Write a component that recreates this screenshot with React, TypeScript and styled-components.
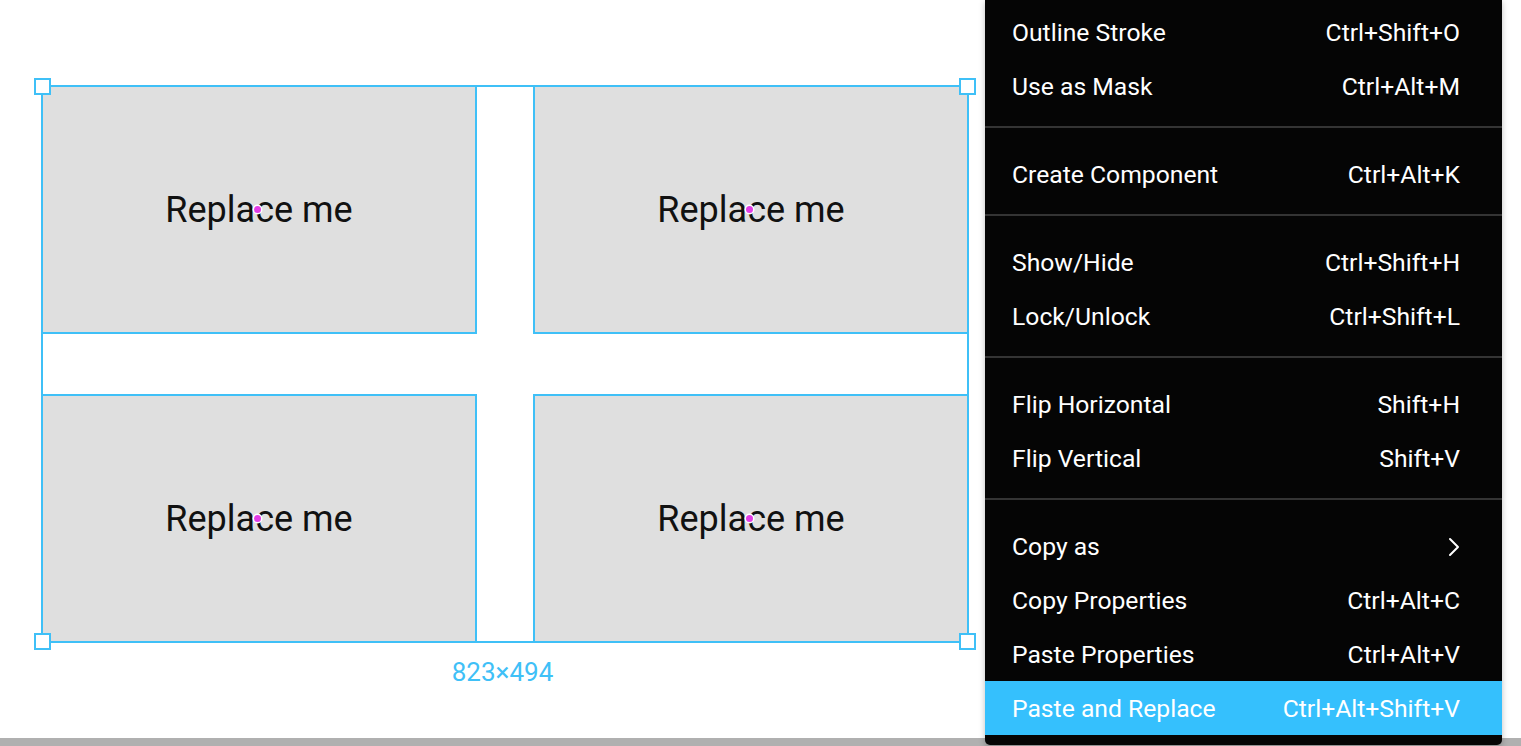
import React from "react";
import styled, { createGlobalStyle } from "styled-components";

const BLUE = "#3fc0f7";

const GlobalStyle = createGlobalStyle`
  html, body { margin: 0; padding: 0; }
  body {
    font-family: Roboto, "Liberation Sans", Arial, sans-serif;
    background: #ffffff;
    overflow: hidden;
  }
  * { box-sizing: border-box; }
`;

const Page = styled.div`
  position: relative;
  width: 1521px;
  height: 746px;
  display: flex;
  flex-direction: column;
  overflow: hidden;
`;

const Canvas = styled.div`
  flex: 1;
  padding: 85px 0 0 41px;
  display: flex;
  flex-direction: column;
  align-items: flex-start;
`;

const Group = styled.div`
  display: flex;
  flex-direction: column;
  align-items: center;
`;

const Selection = styled.div`
  position: relative;
  display: grid;
  grid-template-columns: 436px 436px;
  grid-template-rows: 249px 249px;
  column-gap: 56px;
  row-gap: 60px;
`;

const Card = styled.div`
  position: relative;
  background: #dfdfdf;
  border: 2px solid ${BLUE};
  display: flex;
  align-items: center;
  justify-content: center;
  font-size: 36px;
  color: #111111;
`;

const Pivot = styled.span`
  position: absolute;
  left: 50%;
  top: 50%;
  width: 7px;
  height: 7px;
  margin: -4px 0 0 -5px;
  border-radius: 50%;
  background: #e23ce6;
  box-shadow: 0 0 0 1.5px #ffffff;
`;

const Frame = styled.div`
  position: absolute;
  inset: 0;
  border: 2px solid ${BLUE};
  pointer-events: none;
`;

const Handle = styled.span<{ $x: "left" | "right"; $y: "top" | "bottom" }>`
  position: absolute;
  width: 17px;
  height: 17px;
  background: #ffffff;
  border: 2px solid ${BLUE};
  ${(p) => (p.$x === "left" ? "left: -9px;" : "right: -9px;")}
  ${(p) => (p.$y === "top" ? "top: -9px;" : "bottom: -9px;")}
`;

const SizeLabel = styled.div`
  margin: 15px 5px 0 0;
  font-size: 26px;
  line-height: 28px;
  color: ${BLUE};
`;

const ScrollBar = styled.div`
  height: 8px;
  background: #b0b0b0;
`;

const Menu = styled.div`
  position: absolute;
  top: 0;
  left: 985px;
  width: 517px;
  padding: 5px 0 10px;
  background: #050505;
  border-radius: 0 0 5px 5px;
  box-shadow: 0 2px 6px rgba(0, 0, 0, 0.25);
  color: #ffffff;
`;

const Item = styled.div<{ $active?: boolean }>`
  height: 54px;
  display: flex;
  align-items: center;
  justify-content: space-between;
  padding: 1px 42px 0 27px;
  font-size: 24.7px;
  background: ${(p) => (p.$active ? "#35c0fd" : "transparent")};
`;

const Shortcut = styled.span`
  font-size: 24.7px;
`;

const Separator = styled.div`
  height: 2px;
  margin: 13px 0 19px;
  background: #343434;
`;

const Chevron = () => (
  <svg width="14" height="22" viewBox="0 0 14 22" fill="none">
    <polyline points="4,3 12,11 4,19" stroke="#ffffff" strokeWidth="2" strokeLinecap="round" strokeLinejoin="round" />
  </svg>
);

type Entry = { label: string; key?: string; sub?: boolean; active?: boolean } | "sep";

const entries: Entry[] = [
  { label: "Outline Stroke", key: "Ctrl+Shift+O" },
  { label: "Use as Mask", key: "Ctrl+Alt+M" },
  "sep",
  { label: "Create Component", key: "Ctrl+Alt+K" },
  "sep",
  { label: "Show/Hide", key: "Ctrl+Shift+H" },
  { label: "Lock/Unlock", key: "Ctrl+Shift+L" },
  "sep",
  { label: "Flip Horizontal", key: "Shift+H" },
  { label: "Flip Vertical", key: "Shift+V" },
  "sep",
  { label: "Copy as", sub: true },
  { label: "Copy Properties", key: "Ctrl+Alt+C" },
  { label: "Paste Properties", key: "Ctrl+Alt+V" },
  { label: "Paste and Replace", key: "Ctrl+Alt+Shift+V", active: true },
];

export default function App() {
  return (
    <>
      <GlobalStyle />
      <Page>
        <Canvas>
          <Group>
            <Selection>
              {[0, 1, 2, 3].map((i) => (
                <Card key={i}>
                  Replace me
                  <Pivot />
                </Card>
              ))}
              <Frame>
                <Handle $x="left" $y="top" />
                <Handle $x="right" $y="top" />
                <Handle $x="left" $y="bottom" />
                <Handle $x="right" $y="bottom" />
              </Frame>
            </Selection>
            <SizeLabel>823×494</SizeLabel>
          </Group>
        </Canvas>
        <ScrollBar />
        <Menu>
          {entries.map((e, i) =>
            e === "sep" ? (
              <Separator key={i} />
            ) : (
              <Item key={i} $active={e.active}>
                <span>{e.label}</span>
                {e.sub ? <Chevron /> : <Shortcut>{e.key}</Shortcut>}
              </Item>
            )
          )}
        </Menu>
      </Page>
    </>
  );
}
